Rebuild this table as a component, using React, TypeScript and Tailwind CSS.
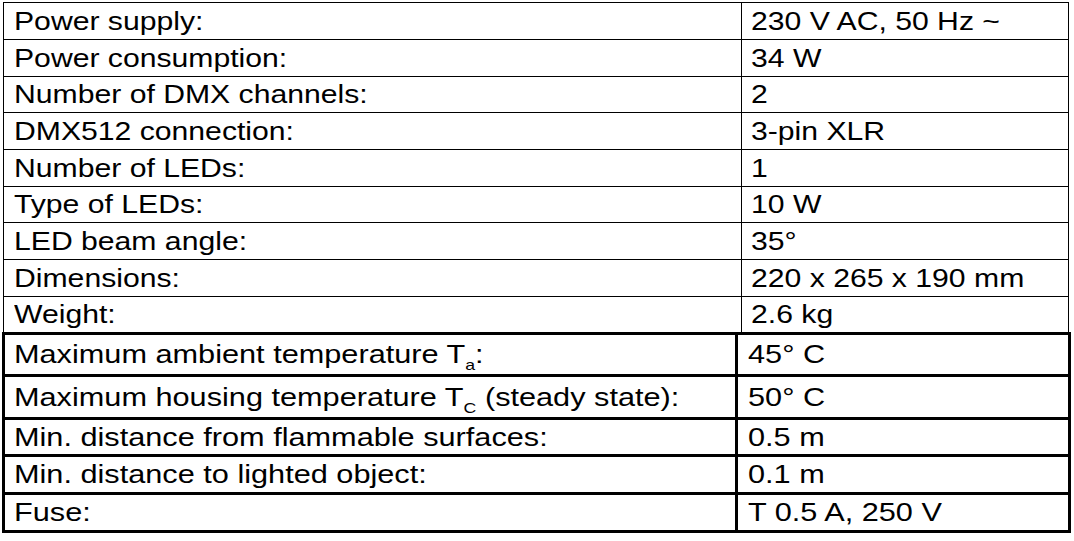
import type { ReactNode } from "react";

type Row = { label: ReactNode; value: string };

const specs: { label: string; value: string; h: string }[] = [
  { label: "Power supply:", value: "230 V AC, 50 Hz ~", h: "h-[36px]" },
  { label: "Power consumption:", value: "34 W", h: "h-[36px]" },
  { label: "Number of DMX channels:", value: "2", h: "h-[35px]" },
  { label: "DMX512 connection:", value: "3-pin XLR", h: "h-[36px]" },
  { label: "Number of LEDs:", value: "1", h: "h-[36px]" },
  { label: "Type of LEDs:", value: "10 W", h: "h-[35px]" },
  { label: "LED beam angle:", value: "35°", h: "h-[36px]" },
  { label: "Dimensions:", value: "220 x 265 x 190 mm", h: "h-[36px]" },
  { label: "Weight:", value: "2.6 kg", h: "h-[35px]" },
];

const Sub = ({ children }: { children: ReactNode }) => (
  <span className="relative top-[7px] text-[15px] leading-none">{children}</span>
);

const safety: (Row & { h: string })[] = [
  {
    label: (
      <>
        Maximum ambient temperature T<Sub>a</Sub>:
      </>
    ),
    value: "45° C",
    h: "h-[39px]",
  },
  {
    label: (
      <>
        Maximum housing temperature T<Sub>C</Sub> (steady state):
      </>
    ),
    value: "50° C",
    h: "h-[40px]",
  },
  { label: "Min. distance from flammable surfaces:", value: "0.5 m", h: "h-[34px]" },
  { label: "Min. distance to lighted object:", value: "0.1 m", h: "h-[35px]" },
  { label: "Fuse:", value: "T 0.5 A, 250 V", h: "h-[35px]" },
];

// the source scan is stretched sideways, so glyphs get a horizontal scale
const Txt = ({ children, wide }: { children: ReactNode; wide?: boolean }) => (
  <span
    className={`inline-block origin-left whitespace-nowrap ${wide ? "scale-x-[1.18]" : "scale-x-[1.16]"}`}
  >
    {children}
  </span>
);

export default function App() {
  return (
    <div className="min-h-screen w-full bg-white pl-[2px] pt-[2px] text-[26px] text-black [font-family:'Liberation_Sans',Arial,sans-serif]">
      {/* general specs */}
      <div className="ml-[1px] w-[1066px] border-x border-t border-black">
        {specs.map((r, i) => (
          <div
            key={r.label}
            className={`flex ${r.h} ${i < specs.length - 1 ? "border-b border-black" : ""} box-content`}
          >
            <div className="flex w-[738px] items-center border-r border-black pl-[10px]">
              <Txt>{r.label}</Txt>
            </div>
            <div className="flex flex-1 items-center pl-[9px]">
              <Txt>{r.value}</Txt>
            </div>
          </div>
        ))}
      </div>

      {/* safety specs */}
      <div className="w-[1069px] border-[3px] border-black">
        {safety.map((r, i) => (
          <div
            key={r.value}
            className={`flex ${r.h} ${i < safety.length - 1 ? "border-b-[3px] border-black" : ""} box-content`}
          >
            <div className="flex w-[733px] items-center border-r-[3px] border-black pl-[9px]">
              <Txt wide>{r.label}</Txt>
            </div>
            <div className="flex flex-1 items-center pl-[10px]">
              <Txt wide>{r.value}</Txt>
            </div>
          </div>
        ))}
      </div>
    </div>
  );
}
